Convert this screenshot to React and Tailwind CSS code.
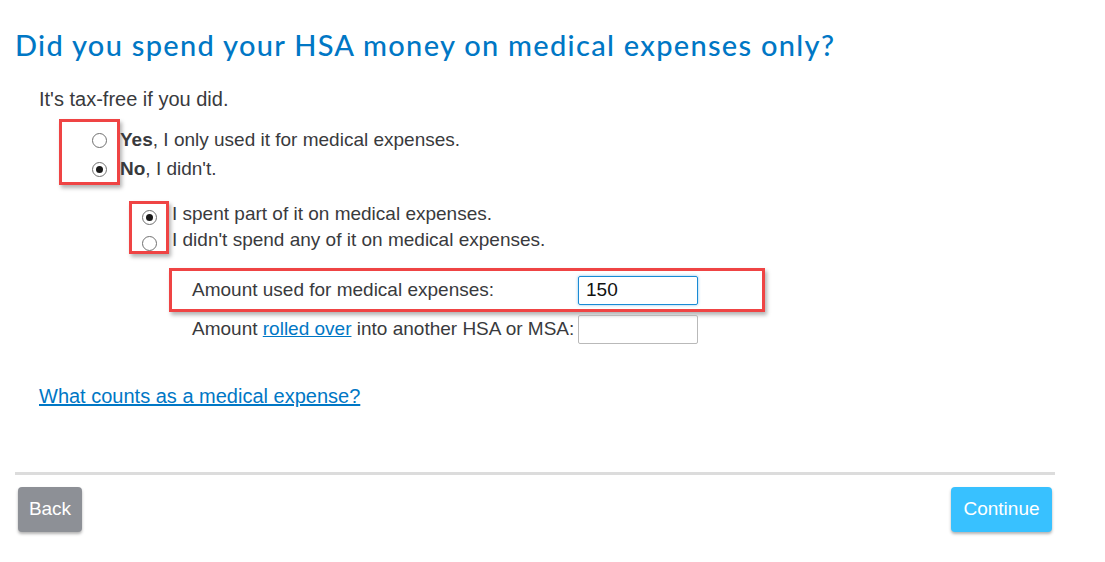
import React from "react";

function Radio({ checked }) {
  return (
    <span className="w-[15px] h-[15px] rounded-full border border-[#707070] bg-white flex items-center justify-center shrink-0">
      {checked && <span className="w-[7px] h-[7px] rounded-full bg-[#1a1a1a]" />}
    </span>
  );
}

export default function App() {
  return (
    <div
      className="w-[1105px] h-[562px] bg-white text-[#393a3d] text-[19px] overflow-hidden"
      style={{ fontFamily: '"Liberation Sans", Arial, sans-serif' }}
    >
      <div className="w-[1040px] ml-[15px]">
        <h1
          className="pt-[28px] text-[29px] leading-[34px] tracking-[1.3px] text-[#0077c5] font-medium whitespace-nowrap"
          style={{ fontFamily: 'Lato, "Noto Sans", sans-serif' }}
        >
          Did you spend your HSA money on medical expenses only?
        </h1>

        <div className="pl-[24px]">
          <p className="mt-[23px] leading-[28px] text-[20px]">It's tax-free if you did.</p>

          <div className="flex mt-[6px] ml-[20px]">
            <div className="w-[61px] h-[66px] border-[3px] border-[#ef4444] shadow-[2px_3px_4px_rgba(0,0,0,0.3)] pl-[30px] pt-[4px]">
              <div className="h-[29px] flex items-center">
                <Radio />
              </div>
              <div className="h-[29px] flex items-center">
                <Radio checked />
              </div>
            </div>
            <div className="pt-[7px]">
              <div className="h-[29px] flex items-center">
                <span>
                  <b className="font-bold">Yes</b>, I only used it for medical expenses.
                </span>
              </div>
              <div className="h-[29px] flex items-center">
                <span>
                  <b className="font-bold">No</b>, I didn't.
                </span>
              </div>
            </div>
          </div>

          <div className="flex mt-[16px] ml-[90px] h-[53px]">
            <div className="w-[40px] h-[53px] border-[3px] border-[#ef4444] shadow-[2px_3px_4px_rgba(0,0,0,0.3)] pl-[10px]">
              <div className="h-[26px] flex items-center">
                <Radio checked />
              </div>
              <div className="h-[26px] flex items-center">
                <Radio />
              </div>
            </div>
            <div className="pl-[3px]">
              <div className="h-[26px] flex items-center">I spent part of it on medical expenses.</div>
              <div className="h-[27px] flex items-center">I didn't spend any of it on medical expenses.</div>
            </div>
          </div>

          <div className="ml-[130px] mt-[14px]">
            <div className="w-[596px] h-[44px] border-[3px] border-[#ef4444] shadow-[2px_3px_4px_rgba(0,0,0,0.3)] flex items-center pl-[20px]">
              <span className="w-[386px]">Amount used for medical expenses:</span>
              <div className="w-[120px] h-[29px] border border-[#1a8ad4] rounded-[2px] shadow-[0_0_3px_rgba(0,140,220,0.5)] flex items-center pl-[7px] text-[#111]">
                150
              </div>
            </div>
            <div className="flex items-center mt-[3px] pl-[23px]">
              <span className="w-[386px]">
                Amount <a className="text-[#0077c5] underline">rolled over</a> into another HSA or MSA:
              </span>
              <div className="w-[120px] h-[29px] border border-[#b9b9b9] rounded-[2px]" />
            </div>
          </div>

          <p className="mt-[38px] leading-[28px] text-[20px]">
            <a className="text-[#0077c5] underline">What counts as a medical expense?</a>
          </p>
        </div>

        <div className="mt-[62px] h-[3px] bg-[#dcdcdc]" />

        <div className="flex justify-between mt-[12px] px-[3px]">
          <button className="w-[64px] h-[45px] rounded-[4px] bg-[#8d9096] text-white text-[19px] shadow-[0_2px_3px_rgba(0,0,0,0.3)]">
            Back
          </button>
          <button className="w-[101px] h-[45px] rounded-[4px] bg-[#38c1ff] text-white text-[19px] shadow-[0_2px_3px_rgba(0,0,0,0.3)]">
            Continue
          </button>
        </div>
      </div>
    </div>
  );
}
